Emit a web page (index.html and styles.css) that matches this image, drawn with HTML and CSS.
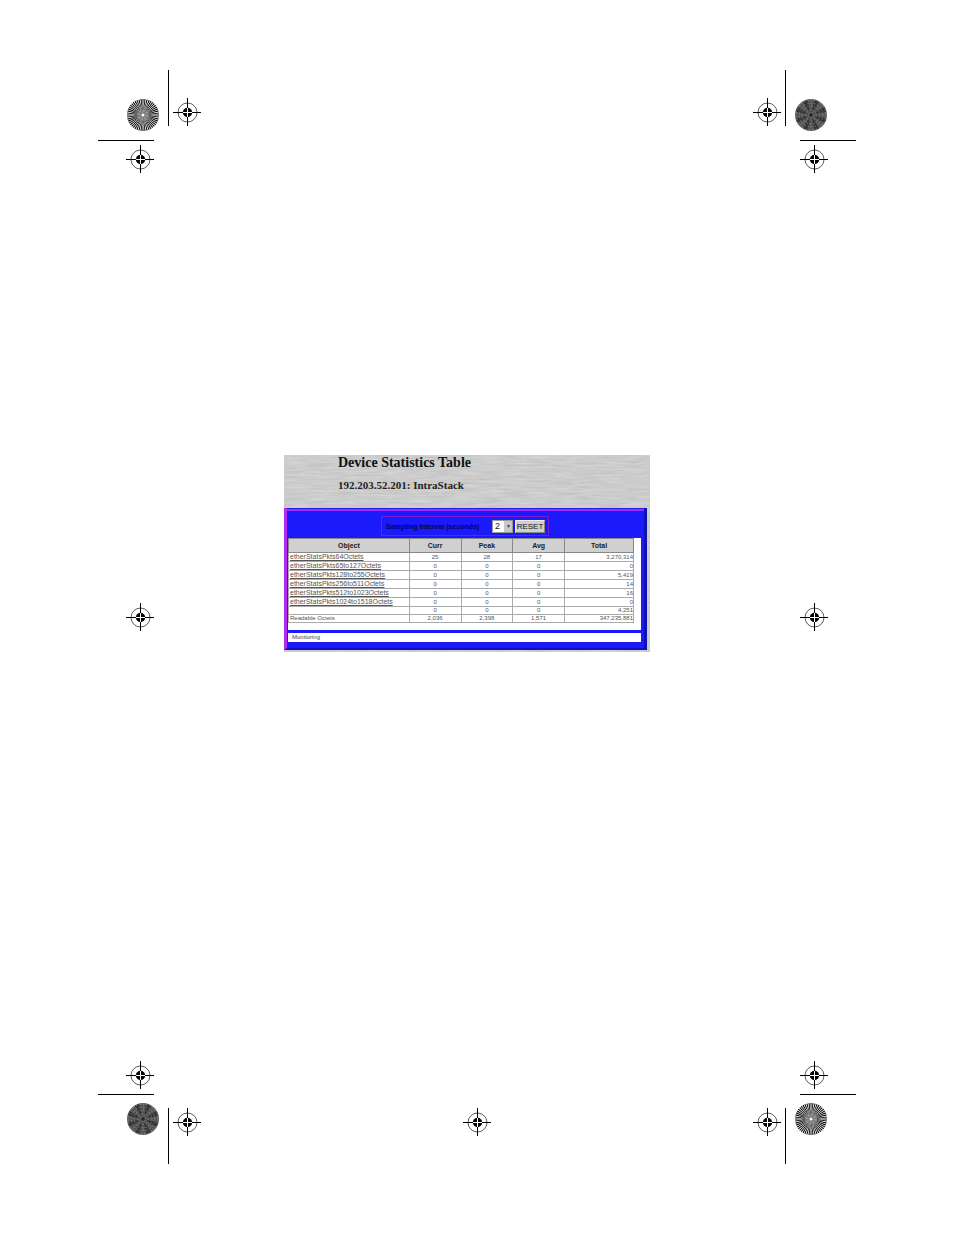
FILE: index.html
```html
<!DOCTYPE html>
<html lang="en">
<head>
    <meta charset="UTF-8">
    <meta name="viewport" content="width=device-width, initial-scale=1.0">
    <title>Device Statistics Table</title>
    <link rel="stylesheet" href="styles.css">
</head>
<body>
    <!-- shared shapes for the printer marks -->
    <svg class="defs" width="0" height="0" aria-hidden="true">
        <symbol id="target" viewBox="0 0 28 28">
            <circle cx="14.5" cy="14.5" r="9.5" fill="none" stroke="#333" stroke-width="0.8"/>
            <path d="M14.5 0v28M0 14.5h28" stroke="#000"/>
            <circle cx="14.5" cy="14.5" r="4.7" fill="#000"/>
            <path d="M14.5 10v9M10 14.5h9" stroke="#fff"/>
        </symbol>
        <symbol id="star" viewBox="0 0 32 32">
            <circle cx="16" cy="16" r="16" fill="#fff"/>
            <circle cx="16" cy="16" r="11" fill="none" stroke="#000" stroke-width="10" pathLength="96" stroke-dasharray="1.1 0.9" stroke-dashoffset="0.55"/>
            <circle cx="16" cy="16" r="6.5" fill="#777"/>
            <circle cx="16" cy="16" r="4" fill="none" stroke="#999" stroke-width="3" pathLength="16" stroke-dasharray="1 1"/>
            <circle cx="16" cy="16" r="1.5" fill="#fff"/>
        </symbol>
        <symbol id="star-dark" viewBox="0 0 32 32">
            <circle cx="16" cy="16" r="16" fill="#606060"/>
            <circle cx="16" cy="16" r="10" fill="none" stroke="#383838" stroke-width="11" pathLength="16" stroke-dasharray="0.8 1.2" stroke-dashoffset="-0.6"/>
            <g fill="none" stroke="#2a2a2a" stroke-dasharray="1.2 1.5">
                <circle cx="16" cy="16" r="4"/>
                <circle cx="16" cy="16" r="7"/>
                <circle cx="16" cy="16" r="10"/>
                <circle cx="16" cy="16" r="13"/>
            </g>
            <g fill="none" stroke="#999" stroke-width="0.8" stroke-dasharray="1 2.5">
                <circle cx="16" cy="16" r="5"/>
                <circle cx="16" cy="16" r="9"/>
                <circle cx="16" cy="16" r="12"/>
                <circle cx="16" cy="16" r="15"/>
            </g>
            <path d="M16 14v4M14 16h4" stroke="#111"/>
        </symbol>
    </svg>

    <div class="sheet">
        <svg class="mark" width="104" height="104" aria-hidden="true">
            <path d="M70.5 0v56M0 70.5h56" stroke="#000"/>
            <use href="#star" x="29" y="29" width="32" height="32"/>
            <use href="#target" x="75" y="28" width="28" height="28"/>
            <use href="#target" x="28" y="75" width="28" height="28"/>
        </svg>
        <span></span>
        <svg class="mark" width="104" height="104" aria-hidden="true">
            <path d="M33.5 0v56M48 70.5h56" stroke="#000"/>
            <use href="#star-dark" x="43" y="29" width="32" height="32"/>
            <use href="#target" x="1" y="28" width="28" height="28"/>
            <use href="#target" x="48" y="75" width="28" height="28"/>
        </svg>

        <svg class="mark side" width="104" height="28" aria-hidden="true">
            <use href="#target" x="28" y="0" width="28" height="28"/>
        </svg>
        <main class="figure">
            <header class="title">
                <h1>Device Statistics Table</h1>
                <h2>192.203.52.201: IntraStack</h2>
            </header>
            <section class="panel">
                <form class="sampling">
                    <label for="interval">Sampling Interval (seconds)</label>
                    <span class="picker">
                        <select id="interval">
                            <option>2</option>
                        </select>
                    </span>
                    <button type="button">RESET</button>
                </form>
                <div class="table-box">
                    <table>
                        <colgroup>
                            <col class="c-object">
                            <col class="c-num">
                            <col class="c-num">
                            <col class="c-num">
                            <col class="c-total">
                        </colgroup>
                        <thead>
                            <tr><th>Object</th><th>Curr</th><th>Peak</th><th>Avg</th><th>Total</th></tr>
                        </thead>
                        <tbody>
                            <tr><td><a href="#">etherStatsPkts64Octets</a></td><td>25</td><td>28</td><td>17</td><td>3,270,314</td></tr>
                            <tr><td><a href="#">etherStatsPkts65to127Octets</a></td><td>0</td><td>0</td><td>0</td><td>0</td></tr>
                            <tr><td><a href="#">etherStatsPkts128to255Octets</a></td><td>0</td><td>0</td><td>0</td><td>5,419</td></tr>
                            <tr><td><a href="#">etherStatsPkts256to511Octets</a></td><td>0</td><td>0</td><td>0</td><td>14</td></tr>
                            <tr><td><a href="#">etherStatsPkts512to1023Octets</a></td><td>0</td><td>0</td><td>0</td><td>16</td></tr>
                            <tr><td><a href="#">etherStatsPkts1024to1518Octets</a></td><td>0</td><td>0</td><td>0</td><td>0</td></tr>
                            <tr><td></td><td>0</td><td>0</td><td>0</td><td>4,251</td></tr>
                            <tr><td>Readable Octets</td><td>2,036</td><td>2,398</td><td>1,571</td><td>347,235,881</td></tr>
                        </tbody>
                    </table>
                </div>
                <p class="status">Monitoring</p>
            </section>
        </main>
        <svg class="mark side" width="104" height="28" aria-hidden="true">
            <use href="#target" x="48" y="0" width="28" height="28"/>
        </svg>

        <svg class="mark" width="104" height="104" aria-hidden="true">
            <path d="M70.5 48v56M0 34.5h56" stroke="#000"/>
            <use href="#star-dark" x="29" y="43" width="32" height="32"/>
            <use href="#target" x="75" y="48" width="28" height="28"/>
            <use href="#target" x="28" y="1" width="28" height="28"/>
        </svg>
        <svg class="mark center" width="28" height="104" aria-hidden="true">
            <use href="#target" x="0" y="48" width="28" height="28"/>
        </svg>
        <svg class="mark" width="104" height="104" aria-hidden="true">
            <path d="M33.5 48v56M48 34.5h56" stroke="#000"/>
            <use href="#star" x="43" y="43" width="32" height="32"/>
            <use href="#target" x="1" y="48" width="28" height="28"/>
            <use href="#target" x="48" y="1" width="28" height="28"/>
        </svg>
    </div>
</body>
</html>
```
FILE: styles.css
```css
* {
    box-sizing: border-box;
}
body {
    margin: 0;
    background: #fff;
    font-family: "Liberation Sans", Arial, sans-serif;
}
.defs {
    display: none;
}
.sheet {
    display: grid;
    grid-template-columns: 104px 1fr 104px;
    grid-template-rows: auto 1fr auto;
    min-height: 100vh;
    padding: 70px 98px 71px;
}
.mark {
    display: block;
}
.side {
    align-self: center;
}
.center {
    justify-self: center;
}

/* grey brushed background behind the applet */
.figure {
    align-self: start;
    margin: 281px 102px 0 82px;
    padding-right: 3px;
    padding-bottom: 2px;
    background-color: #c4c4c4;
    background-image: url("data:image/svg+xml,%3Csvg xmlns='http://www.w3.org/2000/svg' width='366' height='197'%3E%3Cfilter id='n' x='0' y='0' width='100%25' height='100%25'%3E%3CfeTurbulence type='fractalNoise' baseFrequency='0.04 0.5' numOctaves='3' stitchTiles='stitch'/%3E%3CfeColorMatrix values='0.35 0 0 0 0.47 0.35 0 0 0 0.47 0.35 0 0 0 0.47 0 0 0 0 1'/%3E%3C/filter%3E%3Crect width='366' height='197' filter='url(%23n)' opacity='0.6'/%3E%3C/svg%3E");
}
.title {
    height: 53px;
    padding-left: 54px;
    font-family: "Liberation Serif", "Times New Roman", serif;
    color: #111;
}
h1 {
    margin: 0;
    font-size: 14px;
    line-height: 16px;
}
h2 {
    margin: 8px 0 0;
    font-size: 11px;
    line-height: 13px;
    color: #222;
}
.panel {
    padding: 4px 3px 6px 1px;
    background: #1a1afa;
    border-left: 3px solid #b32cf0;
    border-right: 3px solid #1010b8;
    border-bottom: 2px solid #1010b8;
    box-shadow: inset 0 1px #1a1afa, inset 0 3px #a42cf0;
}
.sampling {
    display: flex;
    align-items: center;
    width: 168px;
    height: 20px;
    margin: 4px auto 2px 93px;
    padding: 0 3px 0 4px;
    border: 1px solid #7a1ad8;
}
.sampling label {
    flex: 1;
    font-size: 7px;
    font-weight: bold;
    color: #05054d;
    white-space: nowrap;
}
.picker {
    position: relative;
    display: flex;
    margin-right: 2px;
}
.picker::after {
    content: "▾";
    position: absolute;
    top: 1px;
    right: 1px;
    width: 8px;
    height: 11px;
    font-size: 6px;
    line-height: 11px;
    text-align: center;
    color: #444;
    background: #c8c8c8;
    pointer-events: none;
}
select,
.sampling button {
    height: 13px;
    margin: 0;
    font-family: inherit;
    border-radius: 0;
}
select {
    appearance: none;
    width: 21px;
    padding: 0 2px;
    font-size: 9px;
    line-height: 11px;
    color: #222;
    background: #fff;
    border: 1px solid #999;
}
.sampling button {
    width: 30px;
    padding: 0;
    font-size: 8px;
    line-height: 11px;
    color: #111;
    background: #d0d0d0;
    border: 1px solid #eee;
    border-right-color: #888;
    border-bottom-color: #888;
}
.table-box {
    height: 92px;
    padding-right: 7px;
    background: #fff;
}
table {
    width: 100%;
    height: 84px;
    table-layout: fixed;
    border-collapse: collapse;
}
.c-object {
    width: 35%;
}
.c-num {
    width: 15%;
}
.c-total {
    width: 20%;
}
th,
td {
    padding: 0;
    font-size: 6px;
    line-height: 7px;
    text-align: center;
    white-space: nowrap;
    border: 1px solid #aaa;
}
th {
    height: 14px;
    font-size: 7px;
    color: #222;
    background: #d0d0d0;
    border-color: #888;
}
td {
    color: #555;
}
td:first-child {
    padding-left: 1px;
    text-align: left;
}
td:last-child {
    text-align: right;
}
td a {
    font-size: 7px;
    color: #555;
}
.status {
    height: 9px;
    margin: 3px 0 0;
    padding-left: 4px;
    font-size: 6px;
    line-height: 9px;
    color: #444;
    background: #fff;
}
```
